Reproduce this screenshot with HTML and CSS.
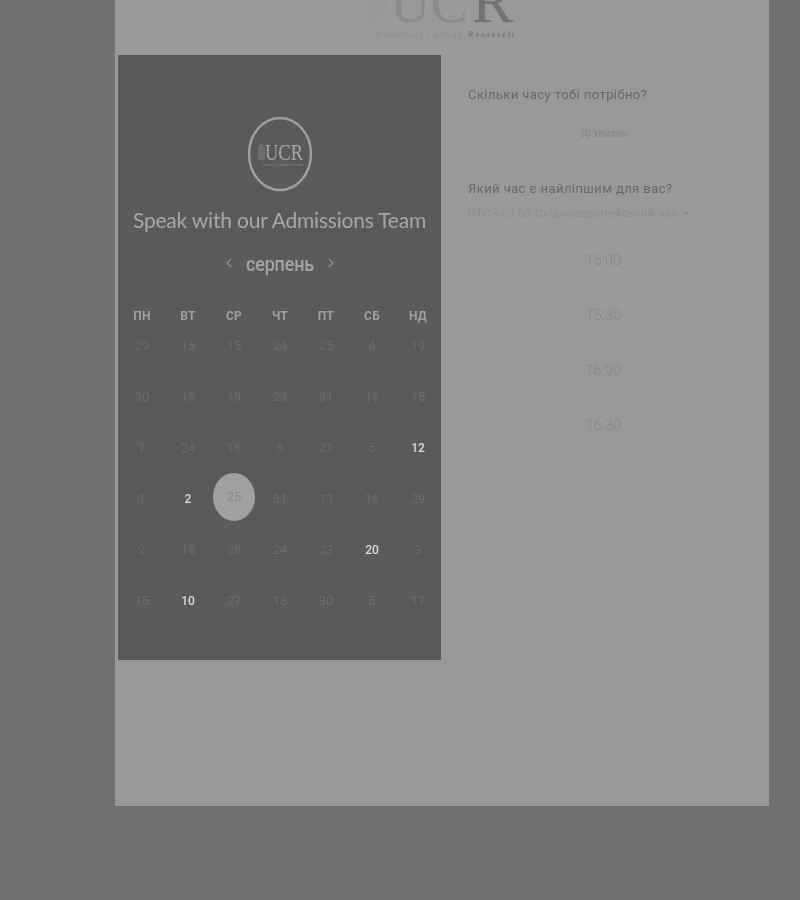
FILE: index.html
```html
<!DOCTYPE html>
<html lang="uk">
<head>
<meta charset="utf-8">
<title>Speak with our Admissions Team</title>
<link rel="stylesheet" href="styles.css">
</head>
<body>
<main class="sheet">
  <header class="brand">
    <svg class="brand-logo" viewBox="0 0 160 55" width="160" height="55" aria-label="University College Roosevelt">
      <g class="brand-lines">
        <path d="M8 0V25M11 0V20M14 0V24M17 0V22M20 0V18M23 0V12"/>
      </g>
      <text class="brand-uc" x="28" y="21.5">UC</text>
      <text class="brand-r" x="110" y="21.5">R</text>
      <text class="brand-sub" x="14" y="37">University College</text>
      <text class="brand-sub-r" x="106" y="37">Roosevelt</text>
    </svg>
  </header>
  <div class="content">
    <section class="panel">
      <svg class="seal" viewBox="0 0 66 76" width="66" height="76" aria-hidden="true">
        <ellipse class="seal-ring" cx="33" cy="38" rx="31" ry="36"/>
        <path class="seal-tower" d="M11 44V32L14 26L18 32V44Z"/>
        <text class="seal-text" x="18" y="44" textLength="38" lengthAdjust="spacingAndGlyphs">UCR</text>
        <text class="seal-sub" x="16" y="49.5" textLength="40" lengthAdjust="spacingAndGlyphs">University College Roosevelt</text>
      </svg>
      <h1 class="panel-title">Speak with our Admissions Team</h1>
      <div class="month">
        <svg class="chev" viewBox="0 0 8 12" width="8" height="12"><path d="M6 2L2 6L6 10"/></svg>
        <span class="month-name">серпень</span>
        <svg class="chev" viewBox="0 0 8 12" width="8" height="12"><path d="M2 2L6 6L2 10"/></svg>
      </div>
      <div class="week">
        <span>ПН</span><span>ВТ</span><span>СР</span><span>ЧТ</span><span>ПТ</span><span>СБ</span><span>НД</span>
      </div>
      <div class="days">
        <span>29</span><span>15</span><span>15</span><span>24</span><span>25</span><span>4</span><span>19</span>
        <span>30</span><span>15</span><span>19</span><span>23</span><span>31</span><span>16</span><span>15</span>
        <span>7</span><span>24</span><span>16</span><span>5</span><span>21</span><span>5</span><span class="on">12</span>
        <span>1</span><span class="on">2</span><span class="sel">25</span><span>31</span><span>13</span><span>16</span><span>29</span>
        <span>2</span><span>18</span><span>28</span><span>24</span><span>23</span><span class="on">20</span><span>3</span>
        <span>15</span><span class="on">10</span><span>27</span><span>18</span><span>30</span><span>5</span><span>17</span>
      </div>
    </section>
    <section class="side">
      <h2 class="q">Скільки часу тобі потрібно?</h2>
      <p class="dur">30 хвилин</p>
      <h2 class="q q-time">Який час є найліпшим для вас?</h2>
      <p class="tz">UTC +03:00 Східноєвропейський час <span class="tz-arrow"></span></p>
      <ul class="slots">
        <li>15:00</li>
        <li>15:30</li>
        <li>16:00</li>
        <li>16:30</li>
      </ul>
    </section>
  </div>
</main>
</body>
</html>
```
FILE: styles.css
```css
* { box-sizing: border-box; }
html, body { margin: 0; height: 100%; }
body {
  background: #707070;
  font-family: Roboto, "Liberation Sans", sans-serif;
  overflow: hidden;
}
.sheet {
  width: 654px;
  height: 806px;
  margin-left: 115px;
  background: #999999;
  filter: blur(0.55px);
}
.brand {
  height: 55px;
  display: flex;
  justify-content: center;
  overflow: hidden;
}
.brand-logo { display: block; flex: none; }
.brand-lines path { stroke: #8f8f8f; stroke-width: 0.5; fill: none; }
.brand-uc {
  font: 56px "Liberation Serif", serif;
  fill: #8b8b8b;
}
.brand-r {
  font: 62px "Liberation Serif", serif;
  fill: #727272;
}
.brand-sub {
  font: 8px "Liberation Serif", serif;
  letter-spacing: 1.45px;
  fill: #8a8a8a;
}
.brand-sub-r {
  font: italic bold 8px "Liberation Serif", serif;
  letter-spacing: 1.8px;
  fill: #767676;
}
.content {
  display: flex;
  padding-left: 3px;
}
.panel {
  width: 323px;
  height: 605px;
  background: #5a5a5a;
  display: flex;
  flex-direction: column;
  align-items: center;
  padding-top: 61px;
}
.seal { display: block; }
.seal-ring { fill: none; stroke: #a0a0a0; stroke-width: 2.4; }
.seal-tower { fill: #6e6e6e; }
.seal-text {
  font: 24px "Liberation Serif", serif;
  fill: #a6a6a6;
}
.seal-sub {
  font: 3.4px "Liberation Sans", sans-serif;
  fill: #868686;
}
.panel-title {
  margin: 13px 0 0;
  font: 400 21px/30px Lato, "Liberation Sans", sans-serif;
  letter-spacing: -0.2px;
  color: #a8a8a8;
  white-space: nowrap;
}
.month {
  display: flex;
  align-items: center;
  gap: 9px;
  margin-top: 14px;
  height: 28px;
}
.month-name {
  width: 76px;
  text-align: center;
  font: 500 20px/28px Roboto, sans-serif;
  letter-spacing: -0.2px;
  color: #a4a4a4;
  transform: translateY(1px) scaleX(0.9);
  white-space: nowrap;
}
.chev { display: block; }
.chev path { fill: none; stroke: #8f8f8f; stroke-width: 1.4; }
.week, .days {
  width: 322px;
  margin-left: 1px;
  display: grid;
  grid-template-columns: repeat(7, 46px);
  justify-items: center;
  align-items: center;
}
.week {
  margin-top: 29px;
  height: 20px;
  font: 700 12px/20px Roboto, sans-serif;
  letter-spacing: 0.3px;
  color: #a0a0a0;
}
.days {
  grid-auto-rows: 51px;
  margin-top: -6px;
  font: 400 13px/20px Roboto, sans-serif;
  color: #6c6c6c;
}
.days span {
  display: flex;
  align-items: center;
  justify-content: center;
}
.days .on { color: #dcdcdc; font-size: 12px; font-weight: 500; }
.days .sel {
  width: 42px;
  height: 48px;
  margin-bottom: 4px;
  border-radius: 50%;
  background: #a1a1a1;
  color: #8a8a8a;
}
.side {
  flex: none;
  width: 301px;
  padding: 30px 3px 0 27px;
  display: flex;
  flex-direction: column;
}
.q {
  margin: 0;
  font: 400 13px/20px Roboto, sans-serif;
  letter-spacing: 0.42px;
  color: #686868;
  white-space: nowrap;
}
.dur {
  margin: 19px 0 0;
  text-align: center;
  font: 400 10px/20px Roboto, sans-serif;
  color: #858585;
}
.q-time { margin-top: 35px; }
.tz {
  margin: 4px 0 0;
  font: 400 11.5px/20px Roboto, sans-serif;
  letter-spacing: 0.4px;
  color: #8c8c8c;
  white-space: nowrap;
}
.tz-arrow {
  display: inline-block;
  width: 0;
  height: 0;
  margin-left: 2px;
  vertical-align: 2px;
  border-left: 3px solid transparent;
  border-right: 3px solid transparent;
  border-top: 3px solid #868686;
}
.slots {
  list-style: none;
  margin: 27px 0 0;
  padding: 0;
  display: flex;
  flex-direction: column;
  gap: 35px;
  text-align: center;
  font: 300 14px/20px Roboto, sans-serif;
  letter-spacing: 0.3px;
  color: #878787;
}
```
